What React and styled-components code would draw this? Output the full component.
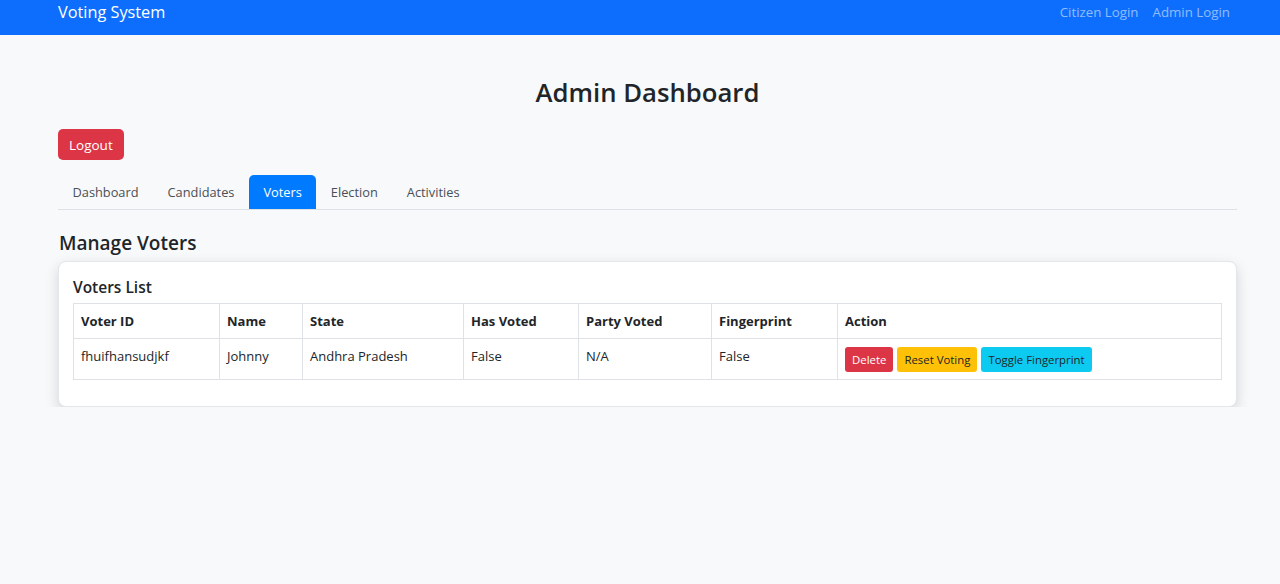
import React from "react";
import styled, { createGlobalStyle } from "styled-components";

const Global = createGlobalStyle`
  * { box-sizing: border-box; }
  body {
    margin: 0;
    background: #f8f9fa;
    font-family: "Open Sans", "Noto Sans", sans-serif;
    color: #212529;
  }
`;

const Navbar = styled.nav`
  height: 35px;
  background: #0d6efd;
  display: flex;
  align-items: center;
  justify-content: space-between;
  padding: 0 50px 0 58px;
`;

const Brand = styled.a`
  color: #fff;
  font-size: 16.3px;
  text-decoration: none;
  margin-top: -11px;
`;

const NavLinks = styled.div`
  display: flex;
  gap: 14px;
  margin-top: -12px;
`;

const NavLink = styled.a`
  color: rgba(255, 255, 255, 0.55);
  font-size: 13.3px;
  text-decoration: none;
`;

const Container = styled.main`
  padding: 0 43px 0 58px;
`;

const Title = styled.h1`
  margin: 41px 0 19px;
  text-align: center;
  font-size: 25.7px;
  font-weight: 600;
  line-height: 34px;
`;

const Button = styled.button`
  display: block;
  border: none;
  border-radius: ${(p) => (p.$small ? "3px" : "5px")};
  font-family: inherit;
  font-size: ${(p) => (p.$small ? "11.4px" : "13.5px")};
  padding: ${(p) => (p.$small ? "0 7px" : "0 11px")};
  height: ${(p) => (p.$small ? "25px" : "31px")};
  background: ${(p) => p.$bg};
  color: ${(p) => p.$fg || "#fff"};
  cursor: pointer;
`;

const Tabs = styled.div`
  display: flex;
  margin-top: 15px;
  border-bottom: 1px solid #dee2e6;
  height: 35px;
`;

const Tab = styled.a`
  display: flex;
  align-items: center;
  padding: 0 14.5px 1px;
  font-size: 12.8px;
  color: ${(p) => (p.$active ? "#fff" : "#495057")};
  background: ${(p) => (p.$active ? "#007bff" : "transparent")};
  border-radius: 5px 5px 0 0;
  text-decoration: none;
`;

const SectionTitle = styled.h3`
  margin: 20px 0 5px 1px;
  font-size: 19px;
  font-weight: 600;
  line-height: 26px;
`;

const Card = styled.section`
  background: #fff;
  border: 1px solid #e3e6ea;
  border-radius: 8px;
  box-shadow: 0 5px 14px rgba(0, 0, 0, 0.15);
  padding: 15px 14px 26px;
`;

const CardTitle = styled.h5`
  margin: 0 0 5px;
  font-size: 15.5px;
  font-weight: 600;
  line-height: 21px;
`;

const Table = styled.table`
  width: 100%;
  border-collapse: collapse;
  table-layout: fixed;
  font-size: 13px;
`;

const Th = styled.th`
  text-align: left;
  font-weight: 700;
  border: 1px solid #dee2e6;
  height: 35px;
  padding: 0 7px;
`;

const Td = styled.td`
  border: 1px solid #dee2e6;
  padding: 7px 7px 7px;
  line-height: 20px;
  vertical-align: top;
`;

const Actions = styled.div`
  display: flex;
  gap: 4px;
  padding-top: 1px;
`;

const cols = [146, 83, 161, 115, 133, 126, null];
const headers = ["Voter ID", "Name", "State", "Has Voted", "Party Voted", "Fingerprint", "Action"];

export default function App() {
  return (
    <>
      <Global />
      <Navbar>
        <Brand href="#">Voting System</Brand>
        <NavLinks>
          <NavLink href="#">Citizen Login</NavLink>
          <NavLink href="#">Admin Login</NavLink>
        </NavLinks>
      </Navbar>
      <Container>
        <Title>Admin Dashboard</Title>
        <Button $bg="#dc3545">Logout</Button>
        <Tabs>
          <Tab href="#">Dashboard</Tab>
          <Tab href="#">Candidates</Tab>
          <Tab href="#" $active>Voters</Tab>
          <Tab href="#">Election</Tab>
          <Tab href="#">Activities</Tab>
        </Tabs>
        <SectionTitle>Manage Voters</SectionTitle>
        <Card>
          <CardTitle>Voters List</CardTitle>
          <Table>
            <colgroup>
              {cols.map((w, i) => (
                <col key={i} style={w ? { width: w } : undefined} />
              ))}
            </colgroup>
            <thead>
              <tr>
                {headers.map((h) => (
                  <Th key={h}>{h}</Th>
                ))}
              </tr>
            </thead>
            <tbody>
              <tr>
                <Td>fhuifhansudjkf</Td>
                <Td>Johnny</Td>
                <Td>Andhra Pradesh</Td>
                <Td>False</Td>
                <Td>N/A</Td>
                <Td>False</Td>
                <Td>
                  <Actions>
                    <Button $small $bg="#dc3545">Delete</Button>
                    <Button $small $bg="#ffc107" $fg="#212529">Reset Voting</Button>
                    <Button $small $bg="#0dcaf0" $fg="#212529">Toggle Fingerprint</Button>
                  </Actions>
                </Td>
              </tr>
            </tbody>
          </Table>
        </Card>
      </Container>
    </>
  );
}
